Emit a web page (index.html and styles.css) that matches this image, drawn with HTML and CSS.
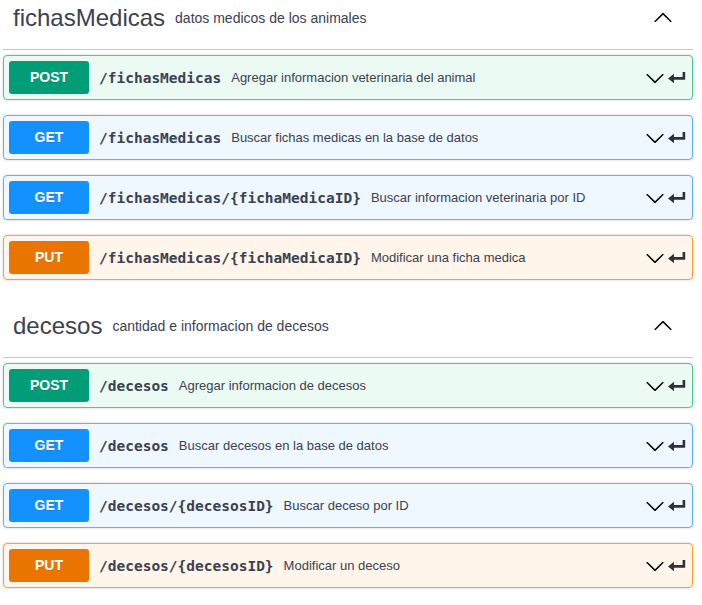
FILE: index.html
```html
<!DOCTYPE html>
<html lang="es">
<head>
<meta charset="utf-8">
<title>Swagger</title>
<link rel="stylesheet" href="styles.css">
</head>
<body>
<div class="page">

  <section class="tag-section">
    <h3 class="tag-header">
      <span class="tag-name">fichasMedicas</span>
      <small class="tag-desc">datos medicos de los animales</small>
      <svg class="tag-arrow" width="20" height="20" viewBox="0 0 20 20"><path transform="rotate(180 10 10)" d="M17.418 6.109c.272-.268.709-.268.979 0s.271.701 0 .969l-7.908 7.830c-.27.268-.707.268-.979 0l-7.908-7.830c-.27-.268-.27-.701 0-.969.271-.268.709-.268.979 0L10 13.25l7.418-7.141z"/></svg>
    </h3>

    <div class="opblock post">
      <div class="summary">
        <span class="method">POST</span>
        <span class="path">/fichasMedicas</span>
        <span class="desc">Agregar informacion veterinaria del animal</span>
        <svg class="chev" width="20" height="20" viewBox="0 0 20 20"><path d="M17.418 6.109c.272-.268.709-.268.979 0s.271.701 0 .969l-7.908 7.83c-.27.268-.707.268-.979 0l-7.908-7.83c-.27-.268-.27-.701 0-.969.271-.268.709-.268.979 0L10 13.25l7.418-7.141z"/></svg>
        <svg class="jump" width="18" height="11" viewBox="0 0 18 11"><path d="M0 6.5 L6 1.8 V5 H14.6 V0 H17.2 V7.8 H6 V11.2 Z"/></svg>
      </div>
    </div>

    <div class="opblock get">
      <div class="summary">
        <span class="method">GET</span>
        <span class="path">/fichasMedicas</span>
        <span class="desc">Buscar fichas medicas en la base de datos</span>
        <svg class="chev" width="20" height="20" viewBox="0 0 20 20"><path d="M17.418 6.109c.272-.268.709-.268.979 0s.271.701 0 .969l-7.908 7.83c-.27.268-.707.268-.979 0l-7.908-7.83c-.27-.268-.27-.701 0-.969.271-.268.709-.268.979 0L10 13.25l7.418-7.141z"/></svg>
        <svg class="jump" width="18" height="11" viewBox="0 0 18 11"><path d="M0 6.5 L6 1.8 V5 H14.6 V0 H17.2 V7.8 H6 V11.2 Z"/></svg>
      </div>
    </div>

    <div class="opblock get">
      <div class="summary">
        <span class="method">GET</span>
        <span class="path">/fichasMedicas/{fichaMedicaID}</span>
        <span class="desc">Buscar informacion veterinaria por ID</span>
        <svg class="chev" width="20" height="20" viewBox="0 0 20 20"><path d="M17.418 6.109c.272-.268.709-.268.979 0s.271.701 0 .969l-7.908 7.83c-.27.268-.707.268-.979 0l-7.908-7.83c-.27-.268-.27-.701 0-.969.271-.268.709-.268.979 0L10 13.25l7.418-7.141z"/></svg>
        <svg class="jump" width="18" height="11" viewBox="0 0 18 11"><path d="M0 6.5 L6 1.8 V5 H14.6 V0 H17.2 V7.8 H6 V11.2 Z"/></svg>
      </div>
    </div>

    <div class="opblock put">
      <div class="summary">
        <span class="method">PUT</span>
        <span class="path">/fichasMedicas/{fichaMedicaID}</span>
        <span class="desc">Modificar una ficha medica</span>
        <svg class="chev" width="20" height="20" viewBox="0 0 20 20"><path d="M17.418 6.109c.272-.268.709-.268.979 0s.271.701 0 .969l-7.908 7.83c-.27.268-.707.268-.979 0l-7.908-7.83c-.27-.268-.27-.701 0-.969.271-.268.709-.268.979 0L10 13.25l7.418-7.141z"/></svg>
        <svg class="jump" width="18" height="11" viewBox="0 0 18 11"><path d="M0 6.5 L6 1.8 V5 H14.6 V0 H17.2 V7.8 H6 V11.2 Z"/></svg>
      </div>
    </div>
  </section>

  <section class="tag-section">
    <h3 class="tag-header">
      <span class="tag-name">decesos</span>
      <small class="tag-desc">cantidad e informacion de decesos</small>
      <svg class="tag-arrow" width="20" height="20" viewBox="0 0 20 20"><path transform="rotate(180 10 10)" d="M17.418 6.109c.272-.268.709-.268.979 0s.271.701 0 .969l-7.908 7.83c-.27.268-.707.268-.979 0l-7.908-7.83c-.27-.268-.27-.701 0-.969.271-.268.709-.268.979 0L10 13.25l7.418-7.141z"/></svg>
    </h3>

    <div class="opblock post">
      <div class="summary">
        <span class="method">POST</span>
        <span class="path">/decesos</span>
        <span class="desc">Agregar informacion de decesos</span>
        <svg class="chev" width="20" height="20" viewBox="0 0 20 20"><path d="M17.418 6.109c.272-.268.709-.268.979 0s.271.701 0 .969l-7.908 7.83c-.27.268-.707.268-.979 0l-7.908-7.83c-.27-.268-.27-.701 0-.969.271-.268.709-.268.979 0L10 13.25l7.418-7.141z"/></svg>
        <svg class="jump" width="18" height="11" viewBox="0 0 18 11"><path d="M0 6.5 L6 1.8 V5 H14.6 V0 H17.2 V7.8 H6 V11.2 Z"/></svg>
      </div>
    </div>

    <div class="opblock get">
      <div class="summary">
        <span class="method">GET</span>
        <span class="path">/decesos</span>
        <span class="desc">Buscar decesos en la base de datos</span>
        <svg class="chev" width="20" height="20" viewBox="0 0 20 20"><path d="M17.418 6.109c.272-.268.709-.268.979 0s.271.701 0 .969l-7.908 7.83c-.27.268-.707.268-.979 0l-7.908-7.83c-.27-.268-.27-.701 0-.969.271-.268.709-.268.979 0L10 13.25l7.418-7.141z"/></svg>
        <svg class="jump" width="18" height="11" viewBox="0 0 18 11"><path d="M0 6.5 L6 1.8 V5 H14.6 V0 H17.2 V7.8 H6 V11.2 Z"/></svg>
      </div>
    </div>

    <div class="opblock get">
      <div class="summary">
        <span class="method">GET</span>
        <span class="path">/decesos/{decesosID}</span>
        <span class="desc">Buscar deceso por ID</span>
        <svg class="chev" width="20" height="20" viewBox="0 0 20 20"><path d="M17.418 6.109c.272-.268.709-.268.979 0s.271.701 0 .969l-7.908 7.83c-.27.268-.707.268-.979 0l-7.908-7.83c-.27-.268-.27-.701 0-.969.271-.268.709-.268.979 0L10 13.25l7.418-7.141z"/></svg>
        <svg class="jump" width="18" height="11" viewBox="0 0 18 11"><path d="M0 6.5 L6 1.8 V5 H14.6 V0 H17.2 V7.8 H6 V11.2 Z"/></svg>
      </div>
    </div>

    <div class="opblock put">
      <div class="summary">
        <span class="method">PUT</span>
        <span class="path">/decesos/{decesosID}</span>
        <span class="desc">Modificar un deceso</span>
        <svg class="chev" width="20" height="20" viewBox="0 0 20 20"><path d="M17.418 6.109c.272-.268.709-.268.979 0s.271.701 0 .969l-7.908 7.83c-.27.268-.707.268-.979 0l-7.908-7.83c-.27-.268-.27-.701 0-.969.271-.268.709-.268.979 0L10 13.25l7.418-7.141z"/></svg>
        <svg class="jump" width="18" height="11" viewBox="0 0 18 11"><path d="M0 6.5 L6 1.8 V5 H14.6 V0 H17.2 V7.8 H6 V11.2 Z"/></svg>
      </div>
    </div>
  </section>

</div>
</body>
</html>
```

FILE: styles.css
```css
html, body {
  margin: 0;
  padding: 0;
  background: #ffffff;
}

body {
  font-family: "Liberation Sans", Arial, sans-serif;
  color: #3b4151;
}

.page {
  margin-top: -13px;
  padding: 0 9px 0 3px;
}

.tag-section {
  display: flex;
  flex-direction: column;
}

.tag-header {
  display: flex;
  align-items: center;
  height: 42px;
  margin: 0 0 5px 0;
  padding: 10px 20px 10px 10px;
  border-bottom: 1px solid rgba(59, 65, 81, 0.3);
  font-size: 24px;
  font-weight: normal;
  color: #3b4151;
}

.tag-name {
  font-size: 24px;
}

.tag-desc {
  flex: 1;
  padding: 0 10px;
  font-size: 14px;
  color: #3b4151;
}

.tag-arrow {
  flex: none;
  fill: #000000;
}

.opblock {
  margin: 0 0 15px 0;
  border: 1px solid #000;
  border-radius: 4px;
  box-shadow: 0 0 3px rgba(0, 0, 0, 0.19);
}

.summary {
  display: flex;
  align-items: center;
  padding: 5px;
}

.method {
  flex: none;
  min-width: 80px;
  height: 33px;
  line-height: 33px;
  border-radius: 3px;
  text-align: center;
  font-size: 14px;
  font-weight: bold;
  color: #ffffff;
  text-shadow: 0 1px 0 rgba(0, 0, 0, 0.1);
}

.path {
  flex: none;
  padding: 0 10px;
  font-family: "DejaVu Sans Mono", "Liberation Mono", monospace;
  font-size: 14.5px;
  font-weight: bold;
  color: #3b4151;
}

.desc {
  flex: 1;
  font-size: 13px;
  color: #3b4151;
}

.chev {
  flex: none;
  fill: #000000;
}

.jump {
  flex: none;
  margin: 0 1.5px 0 2.5px;
  fill: #2e323d;
}

.post {
  background: rgba(73, 204, 144, 0.1);
  border-color: #49cc90;
}
.post .method {
  background: #009d77;
}

.get {
  background: rgba(97, 175, 254, 0.1);
  border-color: #61affe;
}
.get .method {
  background: #1391ff;
}

.put {
  background: rgba(252, 161, 48, 0.1);
  border-color: #fca130;
}
.put .method {
  background: #e97500;
}
```
